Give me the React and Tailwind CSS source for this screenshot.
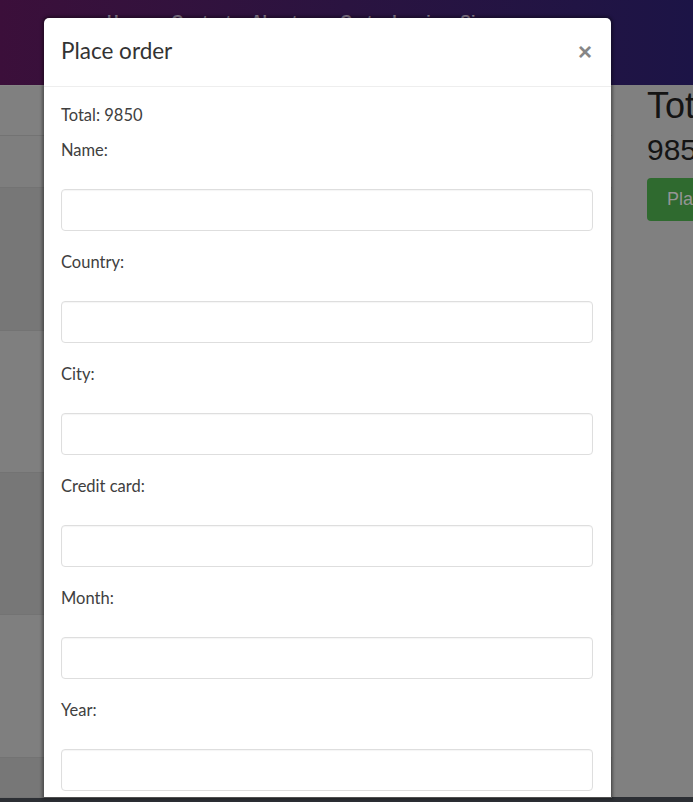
import React from 'react';

const navLinks = ['Home', 'Contact', 'About us', 'Cart', 'Log in', 'Sign up'];
const fields = ['Name:', 'Country:', 'City:', 'Credit card:', 'Month:', 'Year:'];
const rows = [
  'h-[50px] bg-[#808080]',
  'h-[52px] bg-[#7e7e7e]',
  'h-[143px] bg-[#777777]',
  'h-[142px] bg-[#7f7f7f]',
  'h-[142px] bg-[#777777]',
  'h-[143px] bg-[#7f7f7f]',
  'h-[40px] bg-[#777777]',
];

export default function App() {
  return (
    <div className="relative h-[802px] w-[693px] overflow-hidden bg-[#808080] font-['Lato','Liberation_Sans',sans-serif]">
      {/* page behind the dimmed backdrop */}
      <header className="h-[85px] bg-gradient-to-r from-[#3b0f3a] via-[#2a1340] to-[#1c1446]">
        <nav className="flex gap-[20px] pl-[107px] pt-[10px] text-[16px] font-bold text-[#8a7f92] font-['Liberation_Sans',sans-serif]">
          {navLinks.map(l => <span key={l}>{l}</span>)}
        </nav>
      </header>
      <div className="flex h-[712px]">
        <div className="w-[612px] shrink-0 border-t border-[#858585]">
          {rows.map((r, i) => (
            <div key={i} className={`${r} border-b border-[#737373]`} />
          ))}
        </div>
        <div className="min-w-0 flex-1 overflow-hidden pl-[35px] font-['Liberation_Sans',sans-serif] text-[#141414] whitespace-nowrap">
          <div className="text-[36px] leading-[40px] mt-[1px]">Total:</div>
          <div className="text-[30px] leading-[40px] mt-[4px]">9850</div>
          <div className="mt-[8px] h-[43px] w-[140px] rounded bg-[#2f6a2f] pl-[20px] text-[18px] leading-[43px] text-[#959595]">Place order</div>
        </div>
      </div>
      <div className="h-[5px] bg-[#2c2f34]" />

      {/* modal */}
      <div className="absolute left-[44px] top-[18px] h-[779px] w-[567px] overflow-hidden rounded-t-[5px] bg-white shadow-[0_0_3px_2px_rgba(0,0,0,0.35)]">
        <div className="flex h-[69px] items-center justify-between border-b border-[#eeeeee] pl-[17px] pr-[18px]">
          <h4 className="text-[22.5px] leading-none text-[#333333] pb-[2px]">Place order</h4>
          <span className="text-[24px] font-bold leading-none text-[#868686] font-['Liberation_Sans',sans-serif] pr-[1px]">×</span>
        </div>
        <div className="px-[17px] pt-[18px] text-[16.5px] text-[#404040]">
          <div className="h-[20px] leading-[20px]">Total: 9850</div>
          {fields.map((f, i) => (
            <div key={f} className={i === 0 ? 'mt-[15px]' : 'mt-[21px]'}>
              <label className="block h-[20px] leading-[20px]">{f}</label>
              <input
                type="text"
                className="mt-[29px] block h-[42px] w-[532px] rounded border border-[#dedede] bg-white px-3 shadow-[inset_0_1px_1px_rgba(0,0,0,0.04)] focus:outline-none"
              />
            </div>
          ))}
        </div>
      </div>
    </div>
  );
}
